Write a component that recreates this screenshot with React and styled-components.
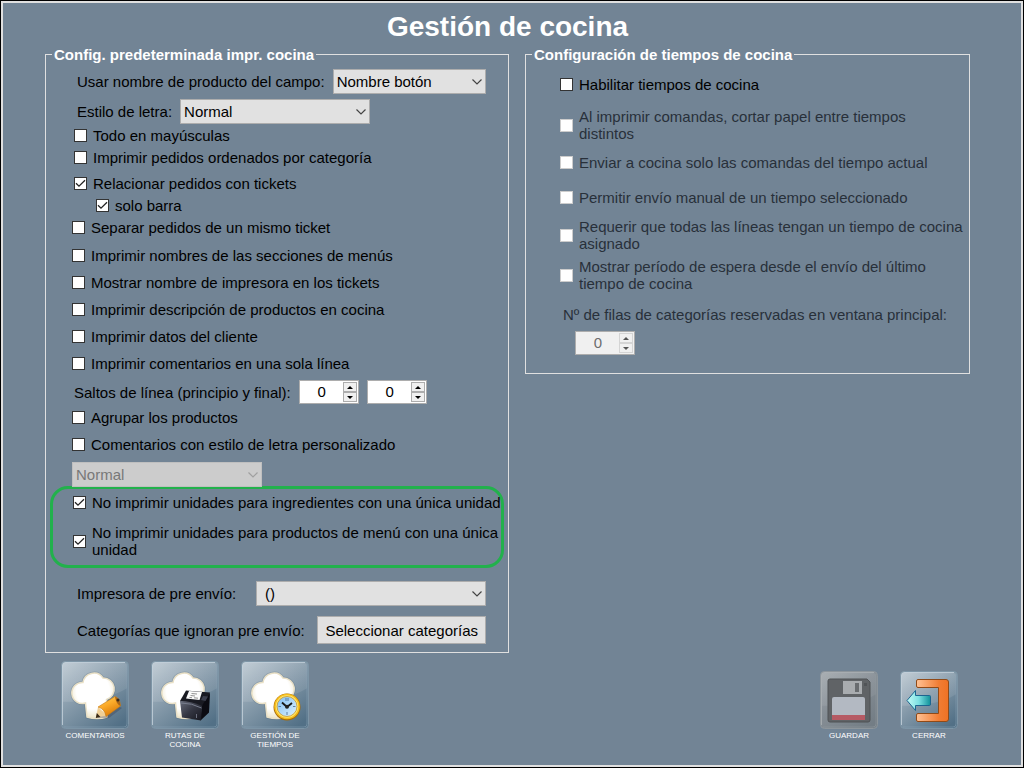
import React, { useId, useState } from "react";
import styled, { createGlobalStyle } from "styled-components";

const GlobalStyle = createGlobalStyle`
  * {
    box-sizing: border-box;
  }

  body {
    margin: 0;
    background: #000;
    color: #000;
    font-family: "Liberation Sans", Arial, sans-serif;
    font-size: 15px;
    line-height: 17px;
  }

  button,
  input,
  select {
    margin: 0;
    font: inherit;
    color: inherit;
  }
`;

const Window = styled.div`
  min-height: 100vh;
  padding: 1px;
`;

const Frame = styled.main`
  min-height: calc(100vh - 2px);
  padding: 8px 51px 16px 42px;
  border: 2px solid #e0e0e0;
  background: #728495;
`;

const Title = styled.h1`
  margin: 0;
  color: #fff;
  font-size: 28px;
  line-height: 32px;
  text-align: center;
`;

const Columns = styled.div`
  display: grid;
  grid-template-columns: 464fr 445fr;
  align-items: start;
  gap: 16px;
  margin-top: 3px;
`;

const Panel = styled.fieldset`
  min-width: 0;
  margin: 0;
  padding: 0 0 ${(props) => props.$bottom}px;
  border: 1px solid #e0e0e0;
`;

const Legend = styled.legend`
  margin-left: 6px;
  padding: 0 2px;
  color: #fff;
  font-weight: bold;
`;

const Group = styled.div`
  display: flex;
  flex-direction: column;
  margin-top: ${(props) => props.$top || 0}px;
  padding: 0 ${(props) => props.$right || 0}px 0 ${(props) => props.$left}px;
`;

const Field = styled.div`
  display: flex;
  align-items: center;
  gap: 8px;
  margin-top: ${(props) => props.$top}px;
  padding: 0 22px 0 ${(props) => props.$left || 31}px;
`;

const FieldLabel = styled.label`
  flex: ${(props) => (props.$grow ? "1" : "none")};
  color: ${(props) => (props.$disabled ? "#28303a" : "#000")};
  white-space: nowrap;
`;

const CheckLabel = styled.label`
  display: flex;
  align-items: center;
  gap: 6px;
  min-height: ${(props) => (props.$compact ? 22 : 27)}px;
  margin-top: ${(props) => props.$top || 0}px;
  margin-left: ${(props) => props.$indent || 0}px;
  color: ${(props) => (props.$disabled ? "#28303a" : "#000")};
`;

const CheckBox = styled.input`
  flex: none;
  appearance: none;
  width: 13px;
  height: 13px;
  border: 1px solid #333;
  background: #fff;

  &:checked {
    background: #fff
      url("data:image/svg+xml,%3Csvg xmlns='http://www.w3.org/2000/svg' viewBox='0 0 11 11'%3E%3Cpath d='M1 5.2 4 8.2 10 2.2' fill='none' stroke='%23222' stroke-width='1.3'/%3E%3C/svg%3E");
  }

  &:disabled {
    border-color: #ccc;
  }
`;

const SelectWrap = styled.div`
  position: relative;
  flex: ${(props) => (props.$width ? "none" : "1")};
  width: ${(props) => (props.$width ? props.$width + "px" : "auto")};
`;

const SelectBox = styled.select`
  display: block;
  appearance: none;
  width: 100%;
  height: 25px;
  padding: 0 20px 0 ${(props) => props.$inset || 3}px;
  border: 1px solid #adadad;
  border-radius: 0;
  background: #e1e1e1;

  &:disabled {
    border-color: #bfbfbf;
    background: #ccc;
    color: #787878;
    opacity: 1;
  }
`;

const Chevron = styled.svg`
  position: absolute;
  top: 10px;
  right: 4px;
  width: 10px;
  height: 6px;
  fill: none;
  stroke: ${(props) => (props.$disabled ? "#a0a0a0" : "#444")};
  pointer-events: none;
`;

const NumberWrap = styled.div`
  display: flex;
  width: 60px;
  height: 24px;
  padding: 1px;
  border: 1px solid #adadad;
  background: ${(props) => (props.$disabled ? "#f0f0f0" : "#fff")};
  color: ${(props) => (props.$disabled ? "#6d6d6d" : "#000")};
`;

const NumberInput = styled.input`
  flex: 1;
  min-width: 0;
  padding: 0 0 2px;
  border: 0;
  background: transparent;
  text-align: center;
`;

const Arrows = styled.div`
  display: flex;
  flex-direction: column;
  width: 14px;
`;

const ArrowButton = styled.button`
  display: flex;
  flex: 1;
  align-items: center;
  justify-content: center;
  padding: 0;
  border: 1px solid ${(props) => (props.disabled ? "#d4d4d4" : "#adadad")};
  background: #f0f0f0;

  svg {
    width: 6px;
    height: 3px;
    fill: ${(props) => (props.disabled ? "#555" : "#000")};
  }
`;

const Highlight = styled.div`
  margin: -1px 4px 0 4px;
  padding: 0 0 7px 20px;
  border: 3px solid #22b14c;
  border-radius: 18px;
`;

const PlainButton = styled.button`
  height: 28px;
  padding: 0 7px;
  border: 1px solid #adadad;
  background: #e1e1e1;
`;

const Footer = styled.footer`
  display: flex;
  justify-content: space-between;
  padding: 8px 12px 0 16px;
`;

const Tools = styled.div`
  display: flex;
  align-items: flex-start;
  gap: 22px;
  padding-top: ${(props) => props.$top || 0}px;
`;

const Tool = styled.button`
  width: ${(props) => props.$size}px;
  padding: 0;
  border: 0;
  background: none;
  color: #fff;
  font-size: 8px;
  line-height: 9px;
  text-align: center;

  svg {
    display: block;
    width: ${(props) => props.$size}px;
    height: ${(props) => props.$size}px;
    margin-bottom: 2px;
  }
`;

function Check({ children, checked, disabled, compact, top, indent }) {
  return (
    <CheckLabel
      $compact={compact}
      $top={top}
      $indent={indent}
      $disabled={disabled}
    >
      <CheckBox type="checkbox" defaultChecked={checked} disabled={disabled} />
      <span>{children}</span>
    </CheckLabel>
  );
}

function Select({ id, value, width, inset, disabled, label }) {
  return (
    <SelectWrap $width={width}>
      <SelectBox id={id} $inset={inset} disabled={disabled} aria-label={label}>
        <option>{value}</option>
      </SelectBox>
      <Chevron viewBox="0 0 10 6" $disabled={disabled}>
        <path d="M.5.5 5 5 9.500.5" strokeWidth="1.2" />
      </Chevron>
    </SelectWrap>
  );
}

function NumberBox({ id, label, disabled }) {
  const [value, setValue] = useState(0);

  return (
    <NumberWrap $disabled={disabled}>
      <NumberInput
        id={id}
        aria-label={label}
        inputMode="numeric"
        value={value}
        disabled={disabled}
        onChange={(e) => setValue(Number(e.target.value) || 0)}
      />
      <Arrows>
        <ArrowButton
          type="button"
          aria-label="Aumentar"
          disabled={disabled}
          onClick={() => setValue(value + 1)}
        >
          <svg viewBox="0 0 6 3">
            <path d="M0 3 3 0 6 3Z" />
          </svg>
        </ArrowButton>
        <ArrowButton
          type="button"
          aria-label="Disminuir"
          disabled={disabled}
          onClick={() => setValue(Math.max(0, value - 1))}
        >
          <svg viewBox="0 0 6 3">
            <path d="M0 0 3 3 6 0Z" />
          </svg>
        </ArrowButton>
      </Arrows>
    </NumberWrap>
  );
}

// Glossy square behind every toolbar icon
function Tile({ size, grey, children }) {
  const id = useId();
  const s = size;

  return (
    <svg viewBox={`0 0 ${s} ${s}`} aria-hidden="true">
      <defs>
        <linearGradient id={id + "base"} x1="0" y1="0" x2="0.8" y2="1">
          <stop offset="0" stopColor={grey ? "#a0a6ab" : "#b8c5cf"} />
          <stop offset="0.5" stopColor={grey ? "#858d94" : "#8398a8"} />
          <stop offset="1" stopColor={grey ? "#737d85" : "#527086"} />
        </linearGradient>
        <linearGradient id={id + "gloss"} x1="0" y1="0" x2="1" y2="1">
          <stop offset="0" stopColor="#fff" stopOpacity={grey ? 0.1 : 0.15} />
          <stop offset="1" stopColor="#fff" stopOpacity={grey ? 0.05 : 0.08} />
        </linearGradient>
      </defs>
      <rect
        x="0.5"
        y="0.5"
        width={s - 1}
        height={s - 1}
        rx="4"
        fill={`url(#${id}base)`}
        stroke={grey ? "#8d959b" : "#7d95a6"}
      />
      <path
        d={`M2 ${s * 0.6}Q${s * 0.65} ${s * 0.6} ${s - 2} ${s * 0.4}V5Q${s - 2} 2 ${s - 5} 2H5Q2 2 2 5Z`}
        fill={`url(#${id}gloss)`}
      />
      <path
        d={`M1.500 ${s - 4}V5Q1.500 1.500 5 1.500H${s - 4}`}
        fill="none"
        stroke={grey ? "#acb1b5" : "#c6d2dc"}
        strokeOpacity="0.8"
      />
      <path
        d={`M${s - 2} 3V${s - 5}Q${s - 2} ${s - 2} ${s - 5} ${s - 2}H3`}
        fill="none"
        stroke={grey ? "#969da2" : "#8da6b7"}
        strokeOpacity="0.5"
      />
      {children}
    </svg>
  );
}

function ChefHat() {
  const id = useId();
  const outline =
    "M24.500 42A10.500 10.500 0 1 1 22 21.500A11 11 0 0 1 42 17A11 11 0 0 1 45.500 38.500L46 56Q36 59 26 56Z";

  return (
    <g>
      <defs>
        <radialGradient id={id} cx="0.5" cy="0.4" r="0.6">
          <stop offset="0.65" stopColor="#fff" />
          <stop offset="1" stopColor="#eee5c8" />
        </radialGradient>
      </defs>
      <path
        d={outline}
        fill="none"
        stroke="#3c5262"
        strokeOpacity="0.2"
        strokeWidth="3"
      />
      <path
        d={outline}
        fill={`url(#${id})`}
        stroke="#e9e0c6"
        strokeWidth="1.5"
      />
    </g>
  );
}

function CommentsIcon() {
  return (
    <Tile size={68}>
      <ChefHat />
      <defs>
        <linearGradient id="pencil" x1="0" y1="0" x2="0.5" y2="1">
          <stop offset="0" stopColor="#ffd25a" />
          <stop offset="0.5" stopColor="#fba928" />
          <stop offset="1" stopColor="#d87a08" />
        </linearGradient>
      </defs>
      <path d="M36 57 48 57 61 47 57 45Z" fill="#334" fillOpacity="0.3" />
      <path d="M37 46 35 56.500 46 54.500Z" fill="#f0cf95" />
      <path d="M35.800 52 34.800 57 39.500 56Z" fill="#3a2a18" />
      <path
        d="M37 46 54 35.500Q59 37 59.500 45L45 55.500Q44 48 37 46Z"
        fill="url(#pencil)"
        stroke="#c87a10"
        strokeWidth="0.6"
      />
      <path d="M54 35.500Q59 37 59.500 45Q55 43 54 35.500Z" fill="#a8661a" />
      <circle cx="57" cy="39" r="1.500" fill="#3c2a18" />
    </Tile>
  );
}

function RoutesIcon() {
  return (
    <Tile size={68}>
      <ChefHat />
      <defs>
        <linearGradient id="printer" x1="0" y1="0" x2="1" y2="1">
          <stop offset="0" stopColor="#666a78" />
          <stop offset="0.5" stopColor="#343642" />
          <stop offset="1" stopColor="#16171f" />
        </linearGradient>
      </defs>
      <path d="M35 29.500 59 31.500 57 38 50.500 46 29 40Z" fill="#191a22" />
      <path d="M59 32 58 51.500 49.500 59.500 50.500 45.500Z" fill="#0b0b12" />
      <path d="M29 40Q40 40 51 45L50 59.500 31 56.500Z" fill="url(#printer)" />
      <path d="M30 42Q41 42 50.500 47" fill="none" stroke="#787d8d" />
      <path d="M38 30 51 31 48.500 39 35 37.500Z" fill="#fafafa" />
      <path
        d="M40.500 32.500 46 33M39.500 34.500 44 35M38.500 36.500 41 36.700M43 36.800 47 37.200"
        stroke="#777"
        strokeWidth="0.8"
      />
      <path d="M52 35 57 35.500 54.500 40 50 39Z" fill="#3c3f4d" />
      <path d="M45.500 53V57" stroke="#6d7080" />
    </Tile>
  );
}

function TimesIcon() {
  return (
    <Tile size={68}>
      <ChefHat />
      <defs>
        <linearGradient id="face" x1="0" y1="0" x2="1" y2="1">
          <stop offset="0" stopColor="#7fbdf2" />
          <stop offset="1" stopColor="#def2ff" />
        </linearGradient>
      </defs>
      <circle cx="46" cy="46" r="13.500" fill="#a86c08" />
      <circle cx="46" cy="45.500" r="12.800" fill="#f6bd1d" />
      <circle cx="46" cy="45.500" r="11.200" fill="#ffe873" />
      <circle
        cx="46"
        cy="45.500"
        r="10"
        fill="url(#face)"
        stroke="#c88d12"
        strokeWidth="0.7"
      />
      <path
        d="M45 37V40M47 37V40M46 51V54M37.500 45.500H40M52 45.500H54.500"
        stroke="#48698e"
        strokeWidth="0.8"
      />
      <path
        d="M41 41.500 46 46 51 42"
        fill="none"
        stroke="#181818"
        strokeWidth="1.800"
      />
      <circle cx="46" cy="45.800" r="2" fill="#222" />
    </Tile>
  );
}

function SaveIcon() {
  return (
    <Tile size={58} grey>
      <path
        d="M10 8H47L50 11V49Q50 51 48 51H10Q8 51 8 49V10Q8 8 10 8Z"
        fill="#606366"
        stroke="#4f5255"
      />
      <path d="M23 10H42V23H23Z" fill="#a9acaf" />
      <path d="M35 12H39V21H35Z" fill="#696c6f" />
      <path d="M44 12H47V15H44Z" fill="#515457" />
      <path d="M14 26H43Q45 26 45 28V44H12V28Q12 26 14 26Z" fill="#b3b9c2" />
      <path d="M12 44H45V49H12Z" fill="#b65a64" />
    </Tile>
  );
}

function CloseIcon() {
  return (
    <Tile size={58}>
      <defs>
        <linearGradient id="door" x1="0" y1="0" x2="1" y2="0">
          <stop offset="0" stopColor="#ffc193" />
          <stop offset="0.7" stopColor="#f07d34" />
          <stop offset="1" stopColor="#ef7224" />
        </linearGradient>
        <linearGradient id="arrow" x1="0" y1="0" x2="1" y2="0">
          <stop offset="0" stopColor="#c4fbf6" />
          <stop offset="0.5" stopColor="#7be0e2" />
          <stop offset="1" stopColor="#0f9099" />
        </linearGradient>
      </defs>
      <path
        d="M18 8.500H46Q48.500 8.500 48.500 11V48Q48.500 50.500 46 50.500H18Q16.500 50.500 16.500 49V44Q16.500 42.500 18 42.500H38.500V16.500H18Q16.500 16.500 16.500 15V10Q16.500 8.500 18 8.500Z"
        fill="url(#door)"
        stroke="#8f4a18"
      />
      <path
        d="M7 29.500 15.500 19.500V24.500H29.500Q30.500 24.500 30.500 25.500V33Q30.500 34.500 29.500 34.500H15.500V39.500Z"
        fill="url(#arrow)"
        stroke="#1c6590"
      />
    </Tile>
  );
}

function PrintPanel() {
  return (
    <Panel $bottom={8}>
      <Legend>Config. predeterminada impr. cocina</Legend>
      <Field $top={6}>
        <FieldLabel htmlFor="campo">
          Usar nombre de producto del campo:
        </FieldLabel>
        <Select id="campo" value="Nombre botón" />
      </Field>
      <Field $top={5}>
        <FieldLabel htmlFor="estilo">Estilo de letra:</FieldLabel>
        <Select id="estilo" value="Normal" width={190} />
      </Field>
      <Group $left={28}>
        <Check compact>Todo en mayúsculas</Check>
        <Check compact>Imprimir pedidos ordenados por categoría</Check>
        <Check compact checked top={4}>
          Relacionar pedidos con tickets
        </Check>
        <Check compact checked indent={22}>
          solo barra
        </Check>
      </Group>
      <Group $left={26}>
        <Check compact>Separar pedidos de un mismo ticket</Check>
      </Group>
      <Group $left={26} $top={4}>
        <Check>Imprimir nombres de las secciones de menús</Check>
        <Check>Mostrar nombre de impresora en los tickets</Check>
        <Check>Imprimir descripción de productos en cocina</Check>
        <Check>Imprimir datos del cliente</Check>
        <Check>Imprimir comentarios en una sola línea</Check>
      </Group>
      <Field $top={3} $left={28}>
        <FieldLabel htmlFor="principio">
          Saltos de línea (principio y final):
        </FieldLabel>
        <NumberBox id="principio" />
        <NumberBox label="Saltos de línea al final" />
      </Field>
      <Group $left={26}>
        <Check>Agrupar los productos</Check>
        <Check>Comentarios con estilo de letra personalizado</Check>
      </Group>
      <Field $top={4} $left={26}>
        <Select
          label="Estilo de letra de los comentarios"
          value="Normal"
          width={190}
          disabled
        />
      </Field>
      <Highlight>
        <Check checked>
          No imprimir unidades para ingredientes con una única unidad
        </Check>
        <Check checked top={8}>
          No imprimir unidades para productos de menú con una única unidad
        </Check>
      </Highlight>
      <Field $top={13}>
        <FieldLabel htmlFor="impresora" $grow>
          Impresora de pre envío:
        </FieldLabel>
        <Select id="impresora" value="()" width={230} inset={8} />
      </Field>
      <Field $top={10}>
        <FieldLabel htmlFor="categorias" $grow>
          Categorías que ignoran pre envío:
        </FieldLabel>
        <PlainButton id="categorias" type="button">
          Seleccionar categorías
        </PlainButton>
      </Field>
    </Panel>
  );
}

function TimesPanel() {
  return (
    <Panel $bottom={18}>
      <Legend>Configuración de tiempos de cocina</Legend>
      <Group $left={34} $right={6} $top={8}>
        <Check>Habilitar tiempos de cocina</Check>
        <Check disabled top={10}>
          Al imprimir comandas, cortar papel entre tiempos distintos
        </Check>
        <Check disabled top={7}>
          Enviar a cocina solo las comandas del tiempo actual
        </Check>
        <Check disabled top={8}>
          Permitir envío manual de un tiempo seleccionado
        </Check>
        <Check disabled top={7}>
          Requerir que todas las líneas tengan un tiempo de cocina asignado
        </Check>
        <Check disabled top={6}>
          Mostrar período de espera desde el envío del último tiempo de cocina
        </Check>
      </Group>
      <Group $left={37} $top={14}>
        <FieldLabel htmlFor="filas" $disabled>
          Nº de filas de categorías reservadas en ventana principal:
        </FieldLabel>
      </Group>
      <Group $left={49} $top={8}>
        <NumberBox id="filas" disabled />
      </Group>
    </Panel>
  );
}

export default function App() {
  return (
    <Window>
      <GlobalStyle />
      <Frame>
        <Title>Gestión de cocina</Title>
        <Columns>
          <PrintPanel />
          <TimesPanel />
        </Columns>
        <Footer>
          <Tools>
            <Tool type="button" $size={68}>
              <CommentsIcon />
              COMENTARIOS
            </Tool>
            <Tool type="button" $size={68}>
              <RoutesIcon />
              RUTAS DE COCINA
            </Tool>
            <Tool type="button" $size={68}>
              <TimesIcon />
              GESTIÓN DE TIEMPOS
            </Tool>
          </Tools>
          <Tools $top={10}>
            <Tool type="button" $size={58} disabled>
              <SaveIcon />
              GUARDAR
            </Tool>
            <Tool type="button" $size={58}>
              <CloseIcon />
              CERRAR
            </Tool>
          </Tools>
        </Footer>
      </Frame>
    </Window>
  );
}
